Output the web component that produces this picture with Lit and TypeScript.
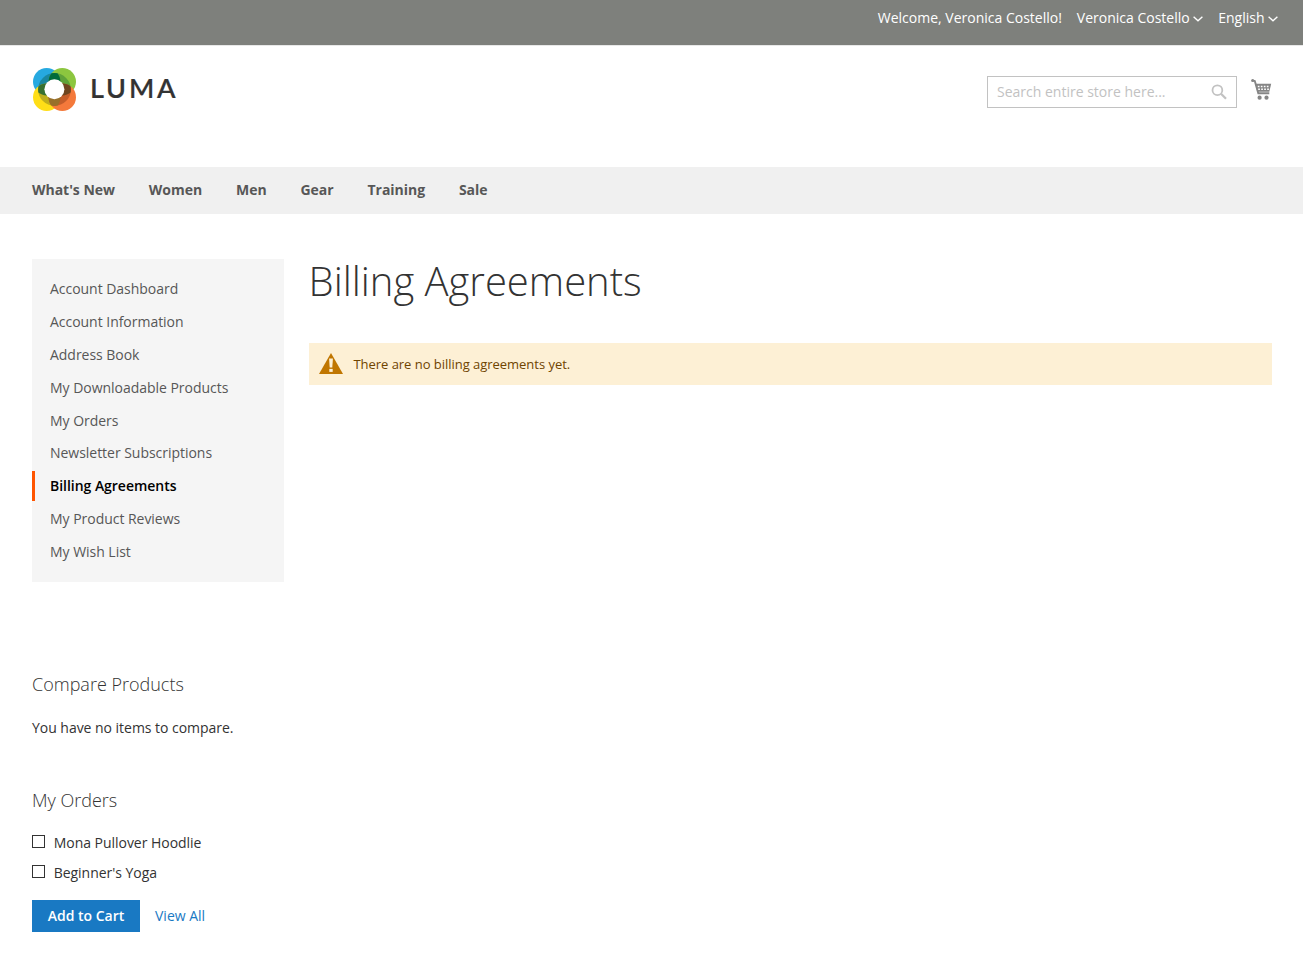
import { LitElement, html, svg, css } from "lit";
import { customElement } from "lit/decorators.js";
import { classMap } from "lit/directives/class-map.js";

const NAV = ["What's New", "Women", "Men", "Gear", "Training", "Sale"];
const ACCOUNT_LINKS = [
  "Account Dashboard",
  "Account Information",
  "Address Book",
  "My Downloadable Products",
  "My Orders",
  "Newsletter Subscriptions",
  "Billing Agreements",
  "My Product Reviews",
  "My Wish List",
];
const CURRENT = "Billing Agreements";
const ORDERED = ["Mona Pullover Hoodlie", "Beginner's Yoga"];

const chevron = html`<svg class="chevron" width="10" height="6" viewBox="0 0 10 6">
  <path d="M.6 .8 5 4.7 9.4 .8" fill="none" stroke="#fff" stroke-width="1.4" />
</svg>`;

const PETALS = [
  { x: 13.7, y: 13.7, c: "#26a9e0" },
  { x: 29.3, y: 13.7, c: "#8cc63f" },
  { x: 13.7, y: 29.3, c: "#ffde17" },
  { x: 29.3, y: 29.3, c: "#f4793b" },
];

// Four petals; the central disc darkens them and the lenses where neighbours meet.
const logoMark = html`<svg class="mark" width="43" height="43" viewBox="0 0 43 43">
  <defs>
    <clipPath id="tl"><circle cx="13.7" cy="13.7" r="13.7" /></clipPath>
    <clipPath id="tr"><circle cx="29.3" cy="13.7" r="13.7" /></clipPath>
    <clipPath id="bl"><circle cx="13.7" cy="29.3" r="13.7" /></clipPath>
    <clipPath id="br"><circle cx="29.3" cy="29.3" r="13.7" /></clipPath>
    <clipPath id="core"><circle cx="21.5" cy="21.5" r="16.4" /></clipPath>
  </defs>
  ${PETALS.map((p) => svg`<circle cx=${p.x} cy=${p.y} r="13.7" fill=${p.c} />`)}
  <g clip-path="url(#core)">
    <g clip-path="url(#tl)"><rect width="43" height="43" fill="#1a87a0" /></g>
    <g clip-path="url(#tr)"><rect width="43" height="43" fill="#5ea23a" /></g>
    <g clip-path="url(#bl)"><rect width="43" height="43" fill="#bfae1c" /></g>
    <g clip-path="url(#br)"><rect width="43" height="43" fill="#c45d2a" /></g>
    <g clip-path="url(#tl)">
      <circle cx="13.7" cy="29.3" r="13.7" fill="#38702f" />
      <circle cx="29.3" cy="13.7" r="13.7" fill="#006b3a" />
    </g>
    <g clip-path="url(#br)">
      <circle cx="13.7" cy="29.3" r="13.7" fill="#98702a" />
      <circle cx="29.3" cy="13.7" r="13.7" fill="#6e4520" />
    </g>
  </g>
  <circle cx="21.4" cy="21.3" r="10" fill="#fff" />
</svg>`;

const searchIcon = html`<svg width="16" height="16" viewBox="0 0 16 16">
  <circle cx="6.4" cy="6.2" r="4.9" fill="none" stroke="#c2c2c2" stroke-width="1.8" />
  <path d="M10 9.8 15 14.8" stroke="#c2c2c2" stroke-width="2.3" />
</svg>`;

const cartIcon = html`<svg width="21" height="22" viewBox="0 0 21 22">
  <path d="M1.3 1.3 3.8 2 7.3 14.2H18.3" fill="none" stroke="#858585" stroke-width="1.9" />
  <circle cx="1.6" cy="1.5" r="1.5" fill="#858585" />
  <path d="M4.2 4.8H20.2L18.3 12.8H6.3Z" fill="#858585" />
  <path d="M6.8 7.5H18.4M7.2 10.3H18" stroke="#fff" stroke-width="1.5" stroke-dasharray="1.7 1.3" />
  <circle cx="8.6" cy="18.7" r="2.1" fill="#858585" />
  <circle cx="15.5" cy="18.7" r="2.1" fill="#858585" />
</svg>`;

const warningIcon = html`<svg class="warn" width="24" height="21" viewBox="0 0 24 21">
  <path d="M12 0 24 21H0Z" fill="#c07600" />
  <path d="M10.1 5.4H13.9L13.3 14.4H10.7Z" fill="#fdf0d5" />
  <rect x="10.3" y="15.9" width="3.4" height="3" fill="#fdf0d5" />
</svg>`;

@customElement("app-root")
export class AppRoot extends LitElement {
  static styles = css`
    :host {
      display: block;
      min-height: 960px;
      box-sizing: border-box;
      background: #fff;
      color: #333;
      font: 14px/20px "Open Sans", sans-serif;
      letter-spacing: -0.03px;
    }
    svg { display: block; flex: none; }
    a { color: inherit; text-decoration: none; }
    ul, h1, h2, p { margin: 0; padding: 0; list-style: none; }
    .panel {
      display: flex;
      justify-content: flex-end;
      gap: 15px;
      height: 44px;
      padding: 8px 25px 0 0;
      box-sizing: border-box;
      background: #7e807c;
      color: #fff;
      letter-spacing: 0;
    }
    .switch { display: flex; }
    .chevron { margin: 8px 0 0 3.5px; }
    .rule { height: 1px; background: #7e807c; border-bottom: 1px solid #e8e8e8; }
    .header {
      display: flex;
      justify-content: space-between;
      height: 121px;
      padding: 21px 31px 0 33px;
      box-sizing: border-box;
    }
    .logo { display: flex; }
    .mark { margin-top: 1px; }
    .word {
      margin: 7px 0 0 14px;
      font: 600 27px/28px Lato, sans-serif;
      letter-spacing: 2.8px;
      color: #333;
      -webkit-text-stroke: 0.2px #333;
    }
    .tools { display: flex; gap: 14px; padding-top: 9px; }
    .search {
      display: flex;
      align-items: center;
      justify-content: space-between;
      width: 250px;
      height: 32px;
      padding: 0 9px;
      box-sizing: border-box;
      border: 1px solid #c2c2c2;
      color: #c2c2c2;
      letter-spacing: 0;
    }
    .cart { padding-top: 3px; }
    .nav {
      display: flex;
      gap: 33.9px;
      height: 47px;
      padding-left: 32px;
      background: #f0f0f0;
      color: #575757;
      font-weight: 700;
      line-height: 46px;
    }
    .page {
      display: grid;
      grid-template-columns: 252px 1fr;
      gap: 25px;
      padding: 45px 31px 0 32px;
    }
    .menu {
      padding: 15px 0 15px;
      height: 323px;
      box-sizing: border-box;
      background: #f5f5f5;
      color: #575757;
    }
    .item { height: 30px; margin-bottom: 2.89px; padding-left: 18px; line-height: 30px; }
    .item.current {
      padding-left: 15px;
      border-left: 3px solid #ff5501;
      color: #000;
      font-weight: 600;
    }
    .side-title { font-size: 18px; line-height: 24px; font-weight: 300; letter-spacing: 0; }
    .compare { margin-top: 90px; }
    .empty { margin-top: 22px; }
    .orders { margin-top: 50px; }
    .list { margin-top: 21px; }
    .product { display: flex; align-items: center; gap: 8.7px; height: 20px; margin-bottom: 10px; }
    .box { width: 13px; height: 13px; box-sizing: border-box; border: 1px solid #333; margin-top: -3px; }
    .actions { display: flex; align-items: center; gap: 15px; margin-top: 17px; }
    .button {
      width: 108px;
      height: 32px;
      padding: 0;
      border: 0;
      background: #1979c3;
      color: #fff;
      font: 600 14px/32px "Open Sans", sans-serif;
    }
    .view { color: #1979c3; letter-spacing: 0; }
    .title { margin-left: -0.4px; font-size: 40px; line-height: 44px; font-weight: 300; letter-spacing: -0.01px; }
    .message {
      display: flex;
      align-items: center;
      gap: 10.4px;
      height: 42px;
      margin-top: 40px;
      padding-left: 10px;
      background: #fdf0d5;
      color: #6f4400;
      font-size: 13px;
    }
    .warn { margin-top: -2px; }
  `;

  render() {
    return html`
      <div class="panel">
        <span>Welcome, Veronica Costello!</span>
        <span class="switch">Veronica Costello${chevron}</span>
        <span class="switch">English${chevron}</span>
      </div>
      <div class="rule"></div>
      <header class="header">
        <a class="logo">${logoMark}<span class="word">LUMA</span></a>
        <div class="tools">
          <div class="search"><span>Search entire store here...</span>${searchIcon}</div>
          <a class="cart">${cartIcon}</a>
        </div>
      </header>
      <nav class="nav">${NAV.map((n) => html`<a>${n}</a>`)}</nav>
      <div class="page">
        <aside>
          <ul class="menu">
            ${ACCOUNT_LINKS.map(
              (l) => html`<li class=${classMap({ item: true, current: l === CURRENT })}>${l}</li>`
            )}
          </ul>
          <section class="compare">
            <h2 class="side-title">Compare Products</h2>
            <p class="empty">You have no items to compare.</p>
          </section>
          <section class="orders">
            <h2 class="side-title">My Orders</h2>
            <ul class="list">
              ${ORDERED.map((o) => html`<li class="product"><span class="box"></span>${o}</li>`)}
            </ul>
            <div class="actions">
              <button class="button">Add to Cart</button><a class="view">View All</a>
            </div>
          </section>
        </aside>
        <main>
          <h1 class="title">Billing Agreements</h1>
          <div class="message">${warningIcon}<span>There are no billing agreements yet.</span></div>
        </main>
      </div>
    `;
  }
}
